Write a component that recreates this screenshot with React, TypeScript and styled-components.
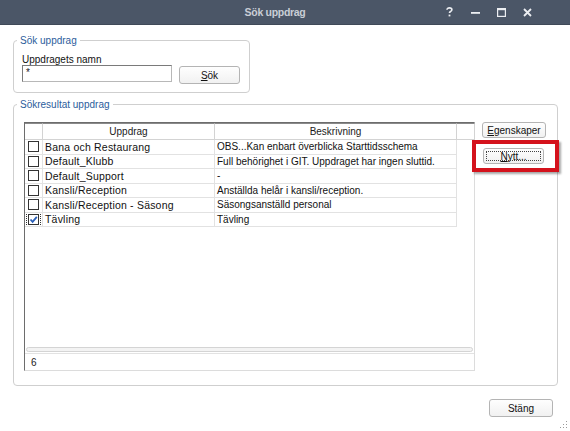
import React from 'react';
import styled, { createGlobalStyle } from 'styled-components';

const GlobalStyle = createGlobalStyle`
  html, body {
    margin: 0;
    padding: 0;
    background: #ffffff;
  }
  body {
    font-family: "Liberation Sans", Arial, sans-serif;
    font-size: 10px;
    color: #1a1a1a;
  }
`;

const Window = styled.div`
  width: 570px;
  height: 431px;
  display: flex;
  flex-direction: column;
  background: #ffffff;
  position: relative;
  overflow: hidden;
`;

const TitleBar = styled.div`
  height: 25px;
  flex: none;
  background: #4b5667;
  display: grid;
  grid-template-columns: 1fr auto 1fr;
  align-items: center;
  border-bottom: 1px solid #3f4958;
  box-sizing: border-box;
`;

const Title = styled.div`
  grid-column: 2;
  padding-right: 20px;
  color: #c9ced6;
  font-size: 10.5px;
  font-weight: 700;
  letter-spacing: -0.3px;
`;

const Controls = styled.div`
  grid-column: 3;
  justify-self: end;
  display: flex;
  align-items: center;
  padding-right: 30px;
`;

const ControlButton = styled.div`
  width: 26px;
  height: 24px;
  display: flex;
  align-items: center;
  justify-content: center;
  color: #eceef2;
`;

const Body = styled.div`
  flex: 1;
  display: flex;
  flex-direction: column;
  padding: 9px 13px 0 13px;
`;

const Group = styled.fieldset<{ $width: number; $height: number }>`
  margin: 0;
  padding: 0;
  width: ${({ $width }) => $width}px;
  height: ${({ $height }) => $height}px;
  box-sizing: border-box;
  border: 1px solid #cfcfcf;
  border-radius: 4px;
  min-width: 0;
`;

const Legend = styled.legend`
  padding: 0 3px;
  margin-left: 3px;
  font-size: 10px;
  line-height: 13px;
  color: #2c5d9c;
`;

const SearchContent = styled.div`
  padding: 7px 8px 0 8px;
  display: flex;
  flex-direction: column;
`;

const FieldLabel = styled.div`
  height: 11px;
  line-height: 11px;
  font-size: 10px;
  color: #111;
`;

const SearchRow = styled.div`
  display: flex;
  align-items: flex-start;
  gap: 7px;
`;

const TextInput = styled.div`
  width: 150px;
  height: 17px;
  box-sizing: border-box;
  border: 1px solid #7a7a7a;
  border-right-color: #b8b8b8;
  border-bottom-color: #b8b8b8;
  padding: 0 3px;
  font-size: 10px;
  line-height: 13px;
`;

const Button = styled.div<{ $width: number; $height?: number; $focused?: boolean }>`
  position: relative;
  width: ${({ $width }) => $width}px;
  height: ${({ $height }) => $height ?? 18}px;
  box-sizing: border-box;
  border: 1px solid #b4b4b4;
  border-radius: 3px;
  background: linear-gradient(#fefefe, #f1f1f1);
  display: flex;
  align-items: center;
  justify-content: center;
  font-size: 10px;
  color: #111;
  flex: none;
  &::after {
    content: '';
    display: ${({ $focused }) => ($focused ? 'block' : 'none')};
    position: absolute;
    inset: 2px;
    border: 1px dotted #444;
  }
  u {
    text-decoration: underline;
    text-underline-offset: 1px;
  }
`;

const SearchButton = styled(Button)`
  margin-top: 1px;
`;

const ResultContent = styled.div`
  padding: 11px 0 0 10px;
  display: flex;
  gap: 7px;
  align-items: flex-start;
`;

const Table = styled.div`
  width: 451px;
  height: 249px;
  box-sizing: border-box;
  border-top: 1px solid #6d6d6d;
  border-left: 1px solid #6d6d6d;
  border-right: 1px solid #dcdcdc;
  border-bottom: 1px solid #dcdcdc;
  display: flex;
  flex-direction: column;
`;

const Grid = styled.div`
  display: grid;
  grid-template-columns: 18px 172px 242px 18px;
  grid-auto-rows: 14.5px;
  grid-template-rows: 17px;
`;

const HeadCell = styled.div`
  border-top: 1px solid #8a8a8a;
  border-right: 1px solid #d3d3d3;
  border-bottom: 1px solid #d3d3d3;
  box-sizing: border-box;
  display: flex;
  align-items: center;
  justify-content: center;
  font-size: 10px;
  color: #1a1a1a;
  &:last-child {
    border-right: none;
  }
`;

const Cell = styled.div<{ $kind: 'check' | 'name' | 'desc' | 'pad' }>`
  box-sizing: border-box;
  border-bottom: ${({ $kind }) => ($kind === 'pad' ? 'none' : '1px solid #e2e2e2')};
  border-right: ${({ $kind }) => ($kind === 'pad' ? 'none' : '1px solid #e2e2e2')};
  display: flex;
  align-items: center;
  justify-content: ${({ $kind }) => ($kind === 'check' ? 'center' : 'flex-start')};
  padding-left: ${({ $kind }) => ($kind === 'name' || $kind === 'desc' ? '2px' : '0')};
  font-size: ${({ $kind }) => ($kind === 'name' ? '10.5px' : '10px')};
  letter-spacing: ${({ $kind }) => ($kind === 'name' ? '0.2px' : '0')};
  white-space: nowrap;
  overflow: hidden;
  color: #111;
`;

const CheckBox = styled.div<{ $checked?: boolean }>`
  width: 11px;
  height: 11px;
  box-sizing: border-box;
  border: 1px solid #333;
  background: #fff;
  display: flex;
  align-items: center;
  justify-content: center;
  outline: ${({ $checked }) => ($checked ? '1px dotted #333' : 'none')};
  outline-offset: 1px;
`;

const Filler = styled.div`
  flex: 1;
`;

const ScrollTrack = styled.div`
  height: 5px;
  margin: 0 1px 1px 1px;
  box-sizing: border-box;
  border: 1px solid #d4d4d4;
  border-radius: 3px;
  background: #f3f3f3;
`;

const CountRow = styled.div`
  height: 16px;
  border-top: 1px solid #e2e2e2;
  display: flex;
  align-items: center;
  padding-left: 6px;
  font-size: 10px;
`;

const SideButtons = styled.div`
  display: flex;
  flex-direction: column;
  gap: 10px;
  align-items: flex-start;
`;

const Highlight = styled.div`
  position: relative;
  margin-left: 1px;
`;

const RedFrame = styled.div`
  position: absolute;
  top: -8px;
  left: -11px;
  right: -15px;
  bottom: -8px;
  border: 4px solid #d4121c;
  box-shadow: 2px 2px 2px rgba(0, 0, 0, 0.35);
  pointer-events: none;
`;

const Footer = styled.div`
  display: flex;
  justify-content: flex-end;
  padding: 13px 4px 0 0;
`;

const Grip = styled.div`
  position: absolute;
  right: 3px;
  bottom: 3px;
  width: 8px;
  height: 8px;
  background-image: radial-gradient(circle, #9a9a9a 0.8px, transparent 1px);
  background-size: 3px 3px;
  clip-path: polygon(100% 0, 100% 100%, 0 100%);
`;

const rows = [
  { name: 'Bana och Restaurang', desc: 'OBS...Kan enbart överblicka Starttidsschema', checked: false },
  { name: 'Default_Klubb', desc: 'Full behörighet i GIT. Uppdraget har ingen sluttid.', checked: false },
  { name: 'Default_Support', desc: '-', checked: false },
  { name: 'Kansli/Reception', desc: 'Anställda helår i kansli/reception.', checked: false },
  { name: 'Kansli/Reception - Säsong', desc: 'Säsongsanställd personal', checked: false },
  { name: 'Tävling', desc: 'Tävling', checked: true },
];

const App = () => (
  <>
    <GlobalStyle />
    <Window>
      <TitleBar>
        <Title>Sök uppdrag</Title>
        <Controls>
          <ControlButton>
            <svg width="7" height="10" viewBox="0 0 7 10">
              <path d="M1 2.8C1 1.6 2 .9 3.4 .9S5.9 1.6 5.9 2.8c0 1.1-.8 1.5-1.6 2-.5.3-.8.6-.8 1.3" fill="none" stroke="currentColor" strokeWidth="1.6" />
              <rect x="2.6" y="7.6" width="1.8" height="1.8" fill="currentColor" />
            </svg>
          </ControlButton>
          <ControlButton>
            <svg width="9" height="9" viewBox="0 0 9 9">
              <rect x="0" y="4" width="9" height="1.8" fill="currentColor" />
            </svg>
          </ControlButton>
          <ControlButton>
            <svg width="9" height="9" viewBox="0 0 9 9">
              <rect x="0.6" y="0.6" width="7.8" height="7.8" fill="none" stroke="currentColor" strokeWidth="1.2" />
              <rect x="0" y="0" width="9" height="2.2" fill="currentColor" />
            </svg>
          </ControlButton>
          <ControlButton>
            <svg width="9" height="9" viewBox="0 0 9 9">
              <path d="M1 1L8 8M8 1L1 8" stroke="currentColor" strokeWidth="1.8" />
            </svg>
          </ControlButton>
        </Controls>
      </TitleBar>
      <Body>
        <Group $width={237} $height={59}>
          <Legend>Sök uppdrag</Legend>
          <SearchContent>
            <FieldLabel>Uppdragets namn</FieldLabel>
            <SearchRow>
              <TextInput>*</TextInput>
              <SearchButton $width={61}>
                <span><u>S</u>ök</span>
              </SearchButton>
            </SearchRow>
          </SearchContent>
        </Group>
        <div style={{ height: 5 }} />
        <Group $width={545} $height={288}>
          <Legend>Sökresultat uppdrag</Legend>
          <ResultContent>
            <Table>
              <Grid>
                <HeadCell />
                <HeadCell>Uppdrag</HeadCell>
                <HeadCell>Beskrivning</HeadCell>
                <HeadCell />
                {rows.map((r) => (
                  <React.Fragment key={r.name}>
                    <Cell $kind="check">
                      <CheckBox $checked={r.checked}>
                        {r.checked && (
                          <svg width="9" height="9" viewBox="0 0 9 9">
                            <path d="M1.5 4.5L3.6 6.8L7.8 1.8" fill="none" stroke="#2a5fb8" strokeWidth="1.8" />
                          </svg>
                        )}
                      </CheckBox>
                    </Cell>
                    <Cell $kind="name">{r.name}</Cell>
                    <Cell $kind="desc">{r.desc}</Cell>
                    <Cell $kind="pad" />
                  </React.Fragment>
                ))}
              </Grid>
              <Filler />
              <ScrollTrack />
              <CountRow>6</CountRow>
            </Table>
            <SideButtons>
              <Button $width={64} $height={16}>
                <span><u>E</u>genskaper</span>
              </Button>
              <Highlight>
                <Button $width={61} $height={16} $focused>
                  <span><u>N</u>ytt...</span>
                </Button>
                <RedFrame />
              </Highlight>
            </SideButtons>
          </ResultContent>
        </Group>
        <Footer>
          <Button $width={64}>Stäng</Button>
        </Footer>
      </Body>
      <Grip />
    </Window>
  </>
);

export default App;
